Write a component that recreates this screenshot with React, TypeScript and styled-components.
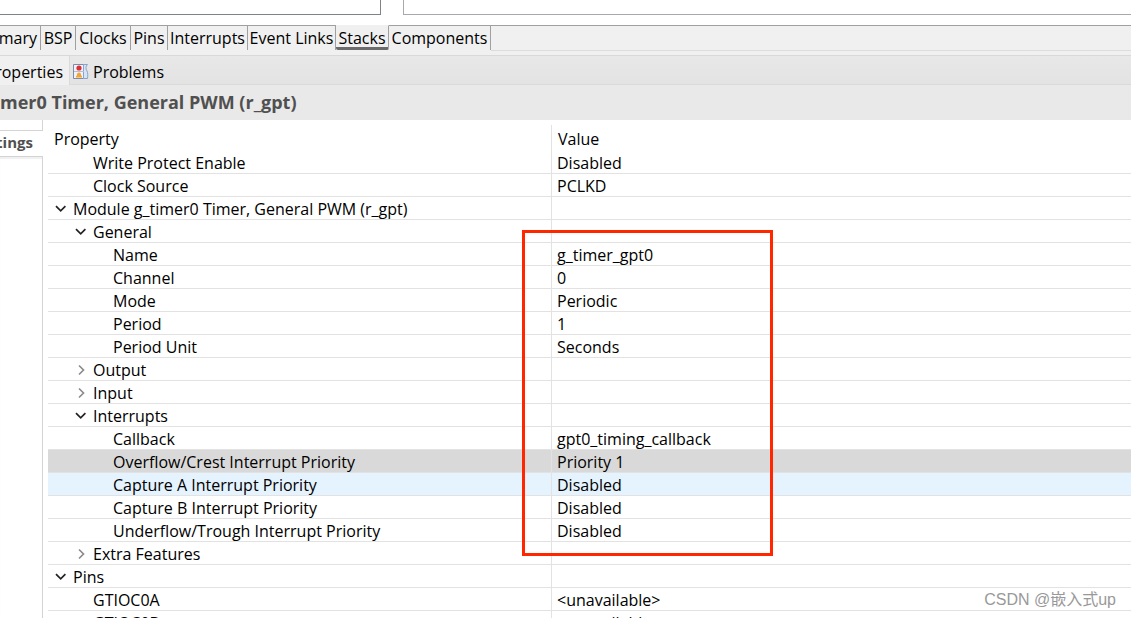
import React from "react";
import styled, { createGlobalStyle } from "styled-components";

const GlobalStyle = createGlobalStyle`
  * { box-sizing: border-box; }
  body {
    margin: 0;
    background: #fff;
    color: #000;
    font-family: "Open Sans", "Noto Sans CJK SC", sans-serif;
    font-size: 16px;
    line-height: 20px;
    overflow: hidden;
  }
  button { font: inherit; color: inherit; }
`;

const Page = styled.div`
  position: relative;
  display: flex;
  flex-direction: column;
  height: 100vh;
  overflow: hidden;
`;

const Panes = styled.div`
  display: flex;
  gap: 22px;
  height: 25px;
  padding-bottom: 10px;
  flex: none;
`;

const LeftPane = styled.div`
  width: 381px;
  border-right: 1px solid #7f8287;
  border-bottom: 1px solid #7f8287;
`;

const RightPane = styled.div`
  flex: 1;
  border-left: 1px solid #a9a9ad;
  border-bottom: 1px solid #a9a9ad;
`;

const EditorTabs = styled.nav`
  display: flex;
  height: 30px;
  flex: none;
  background: #f0f0f0;
`;

const EditorTab = styled.button<{ $width: number; $active?: boolean; $end?: boolean }>`
  width: ${(p) => p.$width}px;
  height: 25px;
  padding: 0 ${(p) => (p.$end ? 3 : 0)}px 0 0;
  display: flex;
  align-items: center;
  justify-content: ${(p) => (p.$end ? "flex-end" : "center")};
  white-space: nowrap;
  background: #f0f0f0;
  border: 0;
  border-top: 1px solid ${(p) => (p.$active ? "#f0f0f0" : "#a0a0a0")};
  border-right: 1px solid #a0a0a0;
  border-bottom: ${(p) => (p.$active ? "3px solid #6b6b6b" : "0")};
  ${(p) => p.$active && "padding: 3px 0 0; border-radius: 0 0 2px 2px;"}
`;

const EditorTabsRest = styled.div`
  flex: 1;
  height: 26px;
  border-top: 1px solid #a0a0a0;
  border-bottom: 1px solid #dcdcdc;
`;

const ViewTabs = styled.nav`
  display: flex;
  height: 30px;
  flex: none;
  border-top: 1px solid #d9d9d9;
  border-bottom: 1px solid #dadada;
  background: linear-gradient(#e8e8e8, #e3e3e3);
`;

const ViewTab = styled.button<{ $active?: boolean }>`
  display: flex;
  align-items: center;
  gap: 4px;
  height: 29px;
  padding: 2px 6px 0 ${(p) => (p.$active ? 0 : 3)}px;
  border: 0;
  border-right: ${(p) => (p.$active ? "1px solid #dadada" : "0")};
  background: ${(p) => (p.$active ? "#f0f0f0" : "transparent")};
`;

const ActiveLabel = styled.span`
  display: flex;
  justify-content: flex-end;
  width: 63px;
`;

const Title = styled.h1`
  margin: 0;
  height: 35px;
  flex: none;
  background: #e9e9e9;
  color: #505050;
  font-size: 18px;
  line-height: 35px;
  font-weight: 700;
  white-space: nowrap;
`;

const Body = styled.main`
  display: flex;
  flex: 1;
  min-height: 0;
`;

const Side = styled.aside`
  display: flex;
  flex-direction: column;
  width: 43px;
  flex: none;
  overflow: hidden;
`;

const SideTop = styled.div`
  height: 11px;
  border-right: 1px solid #d4d4d4;
  border-bottom: 1px solid #d4d4d4;
`;

const SideTab = styled.button`
  display: flex;
  align-items: center;
  justify-content: flex-end;
  height: 25px;
  padding: 0 10px 4px 0;
  border: 0;
  background: #fff;
  color: #505050;
  font-size: 15px;
  font-weight: 700;
`;

const SideRest = styled.div`
  flex: 1;
  border-top: 1px solid #d4d4d4;
  border-right: 1px solid #d4d4d4;
  box-shadow: inset 0 2px 1px #f0f0f0;
`;

const TableArea = styled.section`
  position: relative;
  flex: 1;
  min-width: 0;
  margin-left: 5px;
  padding-top: 5px;
`;

const PropertyTable = styled.table`
  width: 100%;
  table-layout: fixed;
  border-collapse: separate;
  border-spacing: 0;
`;

const Head = styled.th<{ $first?: boolean }>`
  width: ${(p) => (p.$first ? "504px" : "auto")};
  height: 26px;
  padding: 2px 6px 0;
  border-right: ${(p) => (p.$first ? "1px solid #e2e2e2" : "0")};
  text-align: left;
  font-weight: 400;
`;

const Row = styled.tr<{ $tone?: string }>`
  background: ${(p) => p.$tone || "transparent"};
`;

const Cell = styled.td`
  height: 23px;
  padding: 2px 6px 0 5px;
  border-bottom: 1px solid #e2e2e2;
  white-space: nowrap;
`;

const NameCell = styled(Cell)`
  padding: 0;
  border-right: 1px solid #e2e2e2;
`;

const Label = styled.div<{ $level: number }>`
  display: flex;
  align-items: center;
  height: 22px;
  padding: 2px 0 0 ${(p) => p.$level * 20 + 5}px;
`;

const Twisty = styled.button`
  display: flex;
  align-items: center;
  justify-content: center;
  width: 16px;
  height: 16px;
  margin-right: 4px;
  padding: 0;
  border: 0;
  background: none;
`;

const TwistySpace = styled.span`
  width: 20px;
`;

const Highlight = styled.div`
  position: absolute;
  left: 474px;
  top: 110px;
  width: 251px;
  height: 326px;
  border: 3px solid #ff2600;
  pointer-events: none;
`;

const Watermark = styled.div`
  position: absolute;
  right: 15px;
  bottom: 8px;
  color: #999;
  font-family: "Liberation Sans", "Noto Sans CJK SC", sans-serif;
  font-size: 16px;
  line-height: 20px;
`;

type Item = {
  name: string;
  level: number;
  value?: string;
  open?: boolean;
  tone?: string;
};

const items: Item[] = [
  { name: "Write Protect Enable", level: 1, value: "Disabled" },
  { name: "Clock Source", level: 1, value: "PCLKD" },
  { name: "Module g_timer0 Timer, General PWM (r_gpt)", level: 0, open: true },
  { name: "General", level: 1, open: true },
  { name: "Name", level: 2, value: "g_timer_gpt0" },
  { name: "Channel", level: 2, value: "0" },
  { name: "Mode", level: 2, value: "Periodic" },
  { name: "Period", level: 2, value: "1" },
  { name: "Period Unit", level: 2, value: "Seconds" },
  { name: "Output", level: 1, open: false },
  { name: "Input", level: 1, open: false },
  { name: "Interrupts", level: 1, open: true },
  { name: "Callback", level: 2, value: "gpt0_timing_callback" },
  { name: "Overflow/Crest Interrupt Priority", level: 2, value: "Priority 1", tone: "#d9d9d9" },
  { name: "Capture A Interrupt Priority", level: 2, value: "Disabled", tone: "#e5f3ff" },
  { name: "Capture B Interrupt Priority", level: 2, value: "Disabled" },
  { name: "Underflow/Trough Interrupt Priority", level: 2, value: "Disabled" },
  { name: "Extra Features", level: 1, open: false },
  { name: "Pins", level: 0, open: true },
  { name: "GTIOC0A", level: 1, value: "<unavailable>" },
  { name: "GTIOC0B", level: 1, value: "<unavailable>" },
];

const tabs = [
  { label: "mary", width: 41, end: true },
  { label: "BSP", width: 35 },
  { label: "Clocks", width: 55 },
  { label: "Pins", width: 37 },
  { label: "Interrupts", width: 80 },
  { label: "Event Links", width: 88 },
  { label: "Stacks", width: 53, active: true },
  { label: "Components", width: 102 },
];

function Chevron({ open }: { open: boolean }) {
  return (
    <svg width="16" height="16" viewBox="0 0 16 16" fill="none" strokeWidth="1.7">
      {open ? (
        <path d="M3 5.200l4.700 4.700L12.400 5.200" stroke="#222" />
      ) : (
        <path d="M6 3.500l4.500 4.500L6 12.500" stroke="#8c8c8c" />
      )}
    </svg>
  );
}

function ProblemsIcon() {
  return (
    <svg width="16" height="16" viewBox="0 0 16 16">
      <path d="M.5.5h10v14H.5z" fill="#eef2fa" stroke="#7f8aa6" />
      <path d="M10.500.5h4c-2 2-2 4-.5 6.500 1 2 .8 5 .5 7.500h-4z" fill="#d7e4f5" stroke="#8aa3cb" />
      <path d="M1 7.500h10" stroke="#b4bed2" />
      <circle cx="6" cy="4" r="2.600" fill="#dc2f35" />
      <path d="M6 8.500c1.500 0 2 1 2 2.500l1 1.500v1H3v-1L4 11c0-1.500.5-2.500 2-2.500z" fill="#f2a531" />
    </svg>
  );
}

export default function App() {
  return (
    <Page>
      <GlobalStyle />
      <Panes>
        <LeftPane />
        <RightPane />
      </Panes>
      <EditorTabs>
        {tabs.map((t) => (
          <EditorTab key={t.label} $width={t.width} $active={t.active} $end={t.end}>
            {t.label}
          </EditorTab>
        ))}
        <EditorTabsRest />
      </EditorTabs>
      <ViewTabs>
        <ViewTab $active>
          <ActiveLabel>roperties</ActiveLabel>
        </ViewTab>
        <ViewTab>
          <ProblemsIcon />
          Problems
        </ViewTab>
      </ViewTabs>
      <Title>mer0 Timer, General PWM (r_gpt)</Title>
      <Body>
        <Side>
          <SideTop />
          <SideTab>tings</SideTab>
          <SideRest />
        </Side>
        <TableArea>
          <PropertyTable>
            <thead>
              <tr>
                <Head $first>Property</Head>
                <Head>Value</Head>
              </tr>
            </thead>
            <tbody>
              {items.map((item) => (
                <Row key={item.name} $tone={item.tone}>
                  <NameCell>
                    <Label $level={item.level}>
                      {item.open === undefined ? (
                        <TwistySpace />
                      ) : (
                        <Twisty aria-label={`Toggle ${item.name}`} aria-expanded={item.open}>
                          <Chevron open={item.open} />
                        </Twisty>
                      )}
                      {item.name}
                    </Label>
                  </NameCell>
                  <Cell>{item.value}</Cell>
                </Row>
              ))}
            </tbody>
          </PropertyTable>
          <Highlight />
        </TableArea>
      </Body>
      <Watermark>CSDN @嵌入式up</Watermark>
    </Page>
  );
}
